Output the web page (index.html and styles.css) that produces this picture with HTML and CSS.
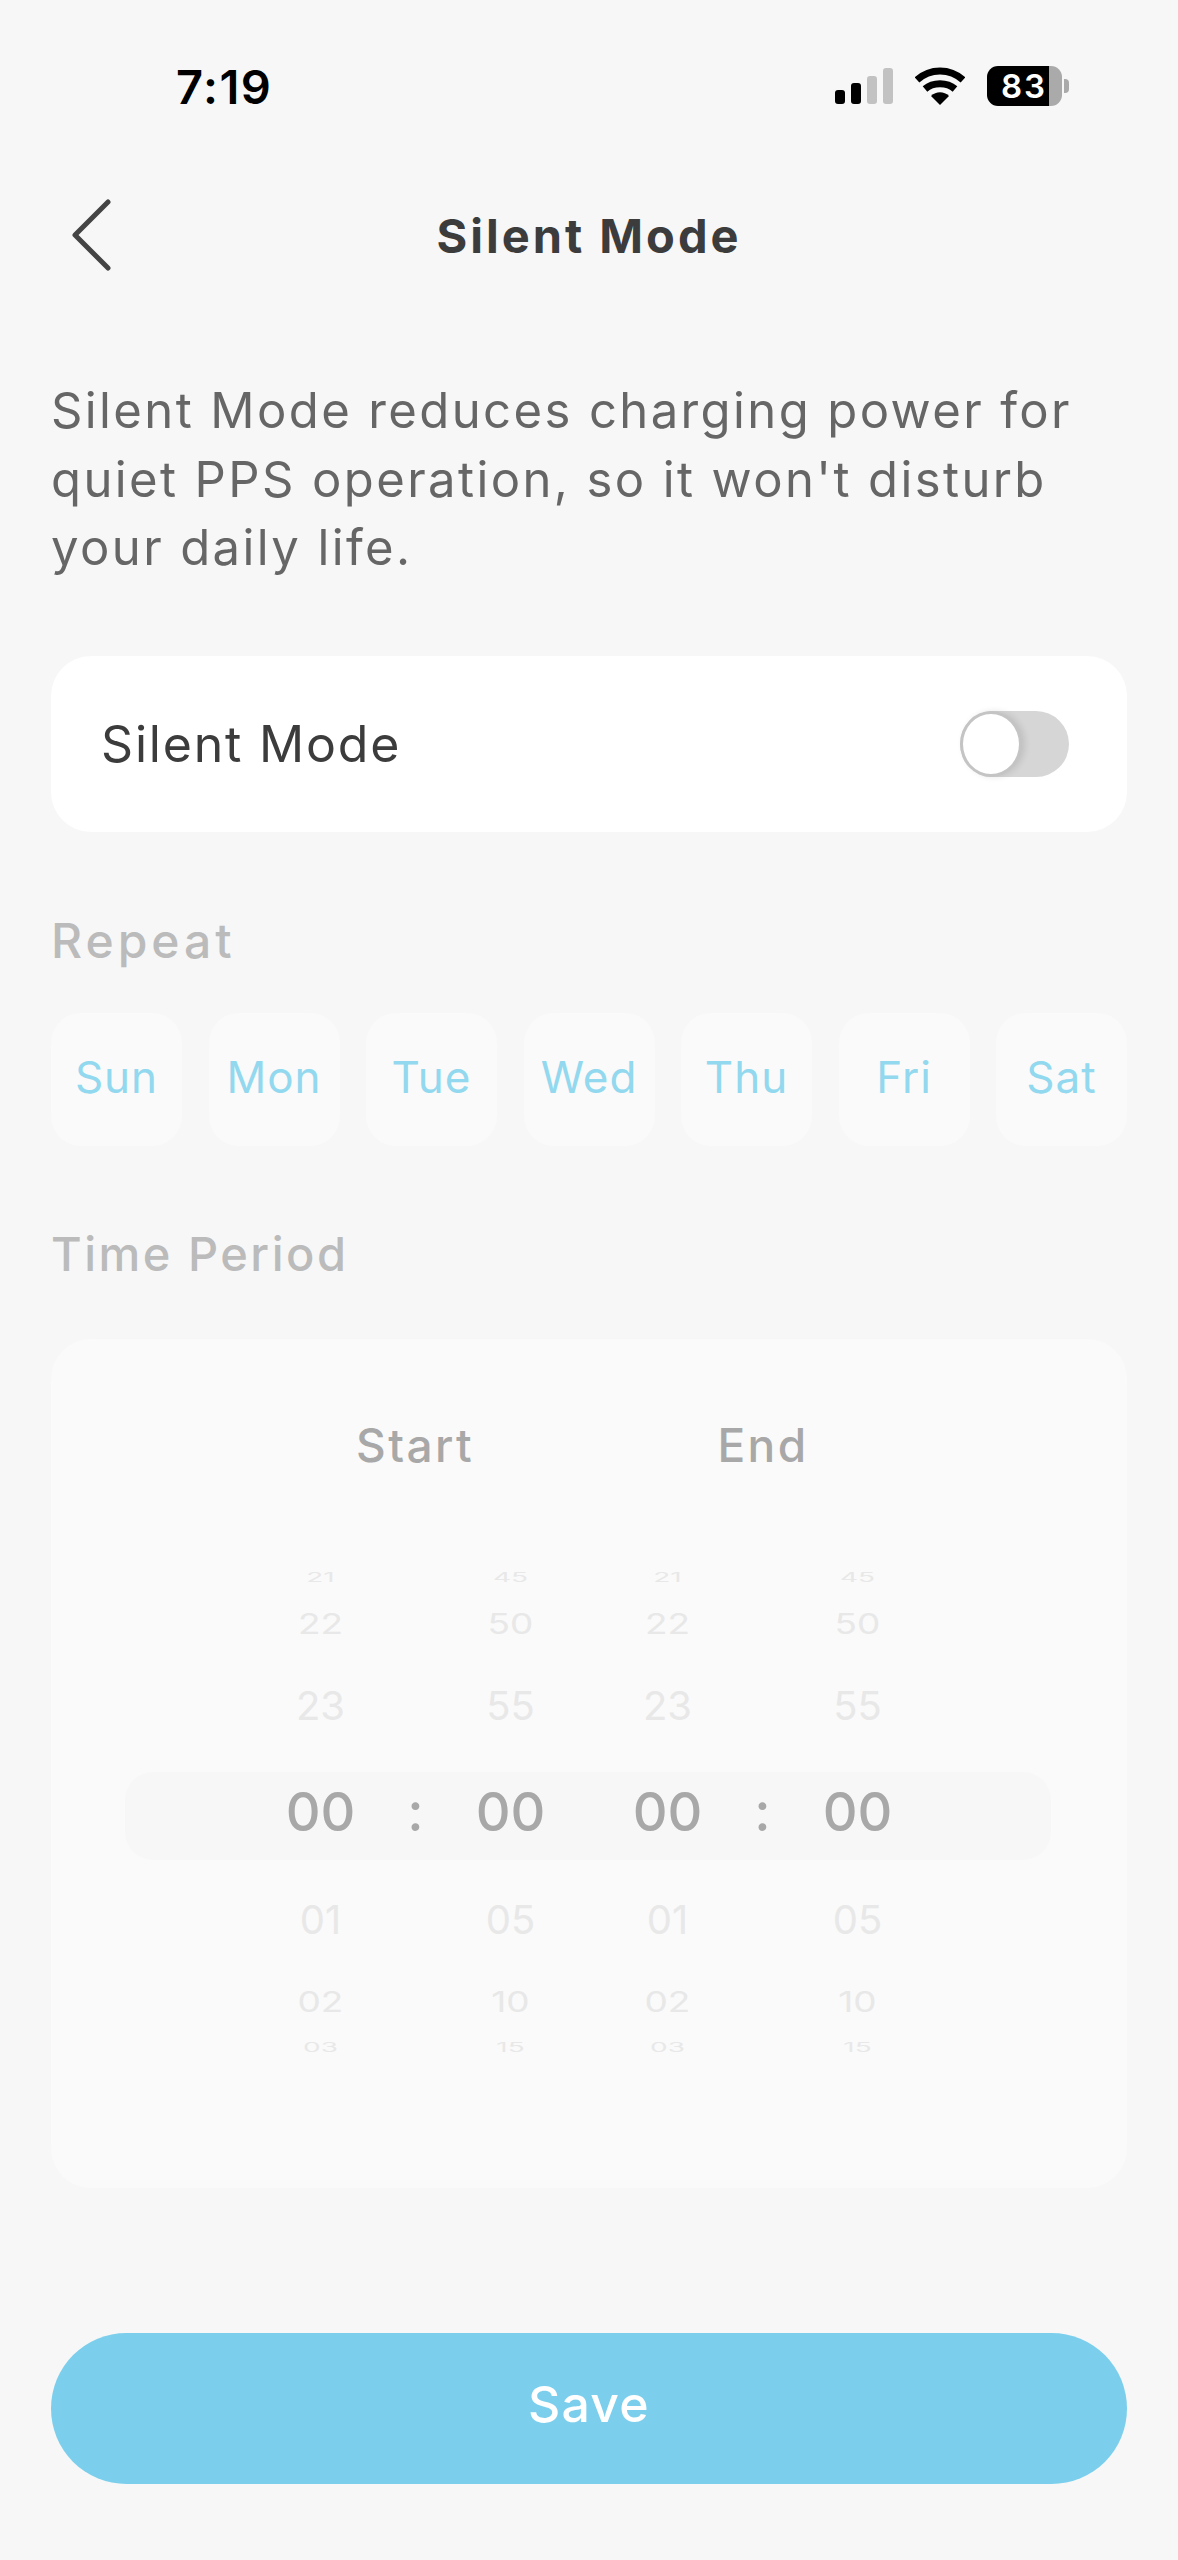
FILE: index.html
```html
<!DOCTYPE html>
<html lang="en">
<head>
  <meta charset="UTF-8" />
  <meta name="viewport" content="width=device-width, initial-scale=1.0"/>
  <title>Silent Mode</title>
  <link rel="stylesheet" href="styles.css">
</head>
<body>
  <div class="status-bar">
    <div class="clock">7:19</div>
    <div class="status-icons">
      <svg class="signal" width="58" height="36" viewBox="0 0 58 36">
        <rect x="0" y="22" width="10" height="14" rx="3" fill="#000"/>
        <rect x="16" y="15" width="10" height="21" rx="3" fill="#000"/>
        <rect x="32" y="8" width="10" height="28" rx="3" fill="#c2c2c2"/>
        <rect x="48" y="0" width="10" height="36" rx="3" fill="#c2c2c2"/>
      </svg>
      <svg class="wifi" width="50" height="38" viewBox="0 0 50 38">
        <path d="M2 13 C15 1 35 1 48 13" fill="none" stroke="#000" stroke-width="7"/>
        <path d="M10 22 C18 15 32 15 40 22" fill="none" stroke="#000" stroke-width="7"/>
        <path d="M16 29 C21 24 29 24 34 29 L25 38 Z" fill="#000"/>
      </svg>
      <div class="battery">
        <div class="battery-body"><span class="battery-num">83</span></div>
        <div class="battery-cap"></div>
      </div>
    </div>
  </div>

  <div class="nav">
    <svg class="back" width="40" height="72" viewBox="0 0 40 72">
      <path d="M37 3 L4 36 L37 69" fill="none" stroke="#444" stroke-width="5" stroke-linecap="round" stroke-linejoin="round"/>
    </svg>
    <div class="nav-title">Silent Mode</div>
  </div>

  <div class="content">
    <p class="desc">Silent Mode reduces charging power for quiet PPS operation, so it won't disturb your daily life.</p>

    <div class="card switch-card">
      <span class="switch-label">Silent Mode</span>
      <div class="switch"><div class="knob"></div></div>
    </div>

    <div class="section-label repeat-label">Repeat</div>
    <div class="days">
      <div class="day">Sun</div>
      <div class="day">Mon</div>
      <div class="day">Tue</div>
      <div class="day">Wed</div>
      <div class="day">Thu</div>
      <div class="day">Fri</div>
      <div class="day">Sat</div>
    </div>

    <div class="section-label period-label">Time Period</div>
    <div class="period-card">
      <div class="period-head">
        <span>Start</span>
        <span>End</span>
      </div>
      <div class="wheel">
        <div class="wheel-band"></div>
        <div class="wheel-col">
          <div class="item r3"><span>21</span></div>
          <div class="item r2"><span>22</span></div>
          <div class="item r1"><span>23</span></div>
          <div class="item selected"><span>00</span></div>
          <div class="item r1 below"><span>01</span></div>
          <div class="item r2"><span>02</span></div>
          <div class="item r3"><span>03</span></div>
        </div>
        <div class="wheel-col colon">
          <div class="item selected"><span>:</span></div>
        </div>
        <div class="wheel-col">
          <div class="item r3"><span>45</span></div>
          <div class="item r2"><span>50</span></div>
          <div class="item r1"><span>55</span></div>
          <div class="item selected"><span>00</span></div>
          <div class="item r1 below"><span>05</span></div>
          <div class="item r2"><span>10</span></div>
          <div class="item r3"><span>15</span></div>
        </div>
        <div class="wheel-col second">
          <div class="item r3"><span>21</span></div>
          <div class="item r2"><span>22</span></div>
          <div class="item r1"><span>23</span></div>
          <div class="item selected"><span>00</span></div>
          <div class="item r1 below"><span>01</span></div>
          <div class="item r2"><span>02</span></div>
          <div class="item r3"><span>03</span></div>
        </div>
        <div class="wheel-col colon">
          <div class="item selected"><span>:</span></div>
        </div>
        <div class="wheel-col">
          <div class="item r3"><span>45</span></div>
          <div class="item r2"><span>50</span></div>
          <div class="item r1"><span>55</span></div>
          <div class="item selected"><span>00</span></div>
          <div class="item r1 below"><span>05</span></div>
          <div class="item r2"><span>10</span></div>
          <div class="item r3"><span>15</span></div>
        </div>
      </div>
    </div>

    <button class="save">Save</button>
  </div>
</body>
</html>
```

FILE: styles.css
```css
* {
  box-sizing: border-box;
}

body {
  margin: 0;
  width: 1178px;
  height: 2560px;
  overflow: hidden;
  background-color: #f7f7f7;
  font-family: "Inter", "Liberation Sans", sans-serif;
}

.status-bar {
  height: 125px;
  padding: 60px 109px 0 176px;
  display: flex;
  justify-content: space-between;
  align-items: flex-start;
}

.clock {
  font-size: 47px;
  line-height: 54px;
  font-weight: 600;
  color: #000;
  letter-spacing: 1.5px;
}

.status-icons {
  display: flex;
  align-items: center;
  gap: 22px;
  padding-top: 6px;
}

.battery {
  display: flex;
  align-items: center;
  gap: 2px;
}

.battery-body {
  width: 75px;
  height: 40px;
  border-radius: 11px;
  background: linear-gradient(to right, #000 83%, #aaa 83%);
  display: flex;
  align-items: center;
  padding-left: 14px;
}

.battery-num {
  color: #fff;
  font-size: 33px;
  font-weight: 600;
  line-height: 40px;
  letter-spacing: 2px;
}

.battery-cap {
  width: 5px;
  height: 14px;
  border-radius: 0 4px 4px 0;
  background-color: #aaa;
}

.nav {
  margin-top: 55px;
  height: 110px;
  position: relative;
  display: flex;
  align-items: center;
  justify-content: center;
}

.back {
  position: absolute;
  left: 71px;
  top: 19px;
}

.nav-title {
  font-size: 47px;
  font-weight: 700;
  color: #3c3c3c;
  letter-spacing: 3px;
}

.content {
  padding: 0 51px;
}

.desc {
  margin: 0;
  padding-top: 87px;
  font-size: 49px;
  line-height: 68.5px;
  letter-spacing: 2.4px;
  color: #666;
}

.card {
  background-color: #fff;
  border-radius: 40px;
}

.switch-card {
  height: 176px;
  margin-top: 73px;
  padding: 0 58px 0 50px;
  display: flex;
  align-items: center;
  justify-content: space-between;
}

.switch-label {
  font-size: 50px;
  letter-spacing: 1.8px;
  color: #3c3c3c;
}

.switch {
  width: 109px;
  height: 66px;
  border-radius: 33px;
  background-color: #d6d6d6;
}

.knob {
  width: 62px;
  height: 66px;
  border-radius: 50%;
  background-color: #fff;
  border: 3px solid #c4c4c4;
  box-shadow: 3px 0 6px rgba(0, 0, 0, 0.1);
}

.section-label {
  font-weight: 500;
  color: #bbb;
  line-height: 56px;
}

.repeat-label {
  margin-top: 81px;
  font-size: 48px;
  letter-spacing: 4px;
}

.days {
  margin-top: 44px;
  display: flex;
  justify-content: space-between;
}

.day {
  width: 131px;
  height: 133px;
  padding-bottom: 5px;
  border-radius: 30px;
  background-color: #fafafa;
  color: #92d8ee;
  font-size: 44px;
  letter-spacing: 1px;
  display: flex;
  align-items: center;
  justify-content: center;
}

.period-label {
  margin-top: 80px;
  font-size: 47px;
  letter-spacing: 2.5px;
}

.period-card {
  margin-top: 57px;
  height: 849px;
  border-radius: 40px;
  background-color: #fafafa;
  padding-top: 76px;
}

.period-head {
  display: flex;
  font-size: 46px;
  font-weight: 500;
  line-height: 60px;
  letter-spacing: 2.4px;
  color: #a8a8a8;
  padding-left: 190px;
}

.period-head span {
  width: 348px;
  text-align: center;
}

.wheel {
  position: relative;
  margin-top: 88px;
  padding-left: 222px;
  display: flex;
}

.wheel-band {
  position: absolute;
  left: 74px;
  right: 76px;
  top: 209px;
  height: 88px;
  border-radius: 28px;
  background-color: #f7f7f7;
}

.wheel-col {
  position: relative;
  width: 95px;
  display: flex;
  flex-direction: column;
  align-items: center;
  color: #e8e8e8;
}

.wheel-col.second {
  margin-left: 62px;
}

.wheel-col.colon {
  padding-top: 194px;
}

.item {
  display: flex;
  align-items: center;
  justify-content: center;
}

.r3 {
  height: 30px;
  font-size: 28px;
}

.r3 span {
  transform: scaleY(0.45);
}

.r2 {
  height: 62px;
  font-size: 37px;
}

.r2 span {
  transform: scaleY(0.75);
}

.r1 {
  height: 102px;
  font-size: 40px;
}

.below {
  margin-top: 2px;
}

.selected {
  height: 110px;
  font-size: 54px;
  font-weight: 500;
  color: #a8a8a8;
}

.save {
  display: block;
  margin-top: 145px;
  width: 100%;
  height: 151px;
  padding-bottom: 10px;
  border: none;
  border-radius: 76px;
  background-color: #7bcfec;
  color: #fff;
  font-family: inherit;
  font-size: 50px;
  font-weight: 500;
  letter-spacing: 1.2px;
}
```
